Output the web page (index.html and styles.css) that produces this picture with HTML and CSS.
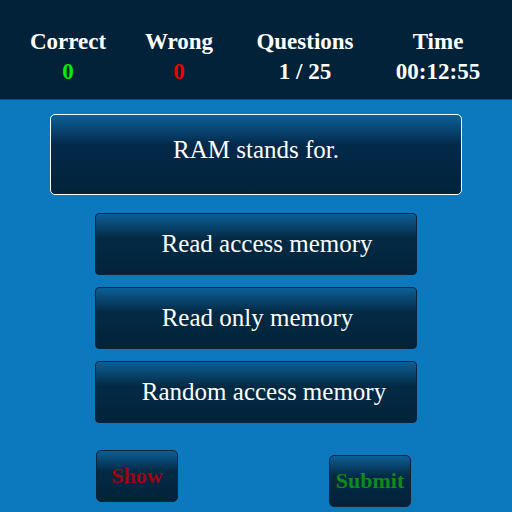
FILE: index.html
```html
<!DOCTYPE html>
<html>
<head>
<meta charset="utf-8">
<link rel="stylesheet" href="styles.css">
</head>
<body>
<header class="stats">
  <div class="stat"><div class="label">Correct</div><div class="value good">0</div></div>
  <div class="stat"><div class="label">Wrong</div><div class="value bad">0</div></div>
  <div class="stat"><div class="label">Questions</div><div class="value">1 / 25</div></div>
  <div class="stat"><div class="label">Time</div><div class="value">00:12:55</div></div>
</header>
<main class="quiz">
  <div class="question">RAM stands for.</div>
  <div class="options">
    <button class="option opt-a">Read access memory</button>
    <button class="option opt-b">Read only memory</button>
    <button class="option opt-c">Random access memory</button>
  </div>
  <div class="actions">
    <button class="action show">Show</button>
    <button class="action submit">Submit</button>
  </div>
</main>
</body>
</html>
```
FILE: styles.css
```css
html, body {
  margin: 0;
  padding: 0;
}
body {
  width: 512px;
  height: 512px;
  overflow: hidden;
  background: #0c79bf;
  font-family: "Liberation Serif", "Times New Roman", serif;
  color: #ffffff;
}
.stats {
  box-sizing: border-box;
  height: 100px;
  background: #022239;
  border-bottom: 1px solid #2a475c;
  display: grid;
  grid-template-columns: 112px 110px 142px 124px;
  padding: 27px 12px 0 12px;
}
.stat {
  text-align: center;
  font-weight: bold;
  font-size: 23px;
  line-height: 30px;
  white-space: nowrap;
}
.value.good { color: #00ee00; }
.value.bad { color: #ee0000; }

.quiz {
  display: flex;
  flex-direction: column;
  align-items: center;
  padding-top: 14px;
}
.question {
  box-sizing: border-box;
  width: 412px;
  height: 81px;
  border: 1px solid #ffffff;
  border-radius: 5px;
  background: linear-gradient(#0d6098 0%, #03294a 38%, #02233a 100%);
  text-align: center;
  font-size: 25px;
  line-height: 28px;
  padding-top: 21px;
}
.options {
  display: flex;
  flex-direction: column;
  gap: 12px;
  margin-top: 18px;
}
.option {
  box-sizing: border-box;
  width: 322px;
  height: 62px;
  border: 1px solid #0a2336;
  border-radius: 4px;
  background: linear-gradient(#0d5f96 0%, #032a45 40%, #02233a 100%);
  color: #ffffff;
  font-family: "Liberation Serif", "Times New Roman", serif;
  font-size: 25px;
  line-height: 28px;
  text-align: center;
  padding: 0;
  margin: 0;
}
.opt-a { padding-left: 22px; }
.opt-b { padding-left: 3px; }
.opt-c { padding-left: 16px; }

.actions {
  align-self: stretch;
  display: flex;
  align-items: flex-start;
  gap: 151px;
  padding-left: 96px;
  margin-top: 27px;
}
.action {
  box-sizing: border-box;
  width: 82px;
  height: 52px;
  border: 1px solid #0a2336;
  border-radius: 5px;
  background: linear-gradient(#0d5f96 0%, #032a45 40%, #02233a 100%);
  font-family: "Liberation Serif", "Times New Roman", serif;
  font-weight: bold;
  font-size: 22px;
  line-height: 26px;
  text-align: center;
  padding: 0;
  margin: 0;
}
.show { color: #a00012; }
.submit { color: #0c8c1a; margin-top: 5px; }
```
